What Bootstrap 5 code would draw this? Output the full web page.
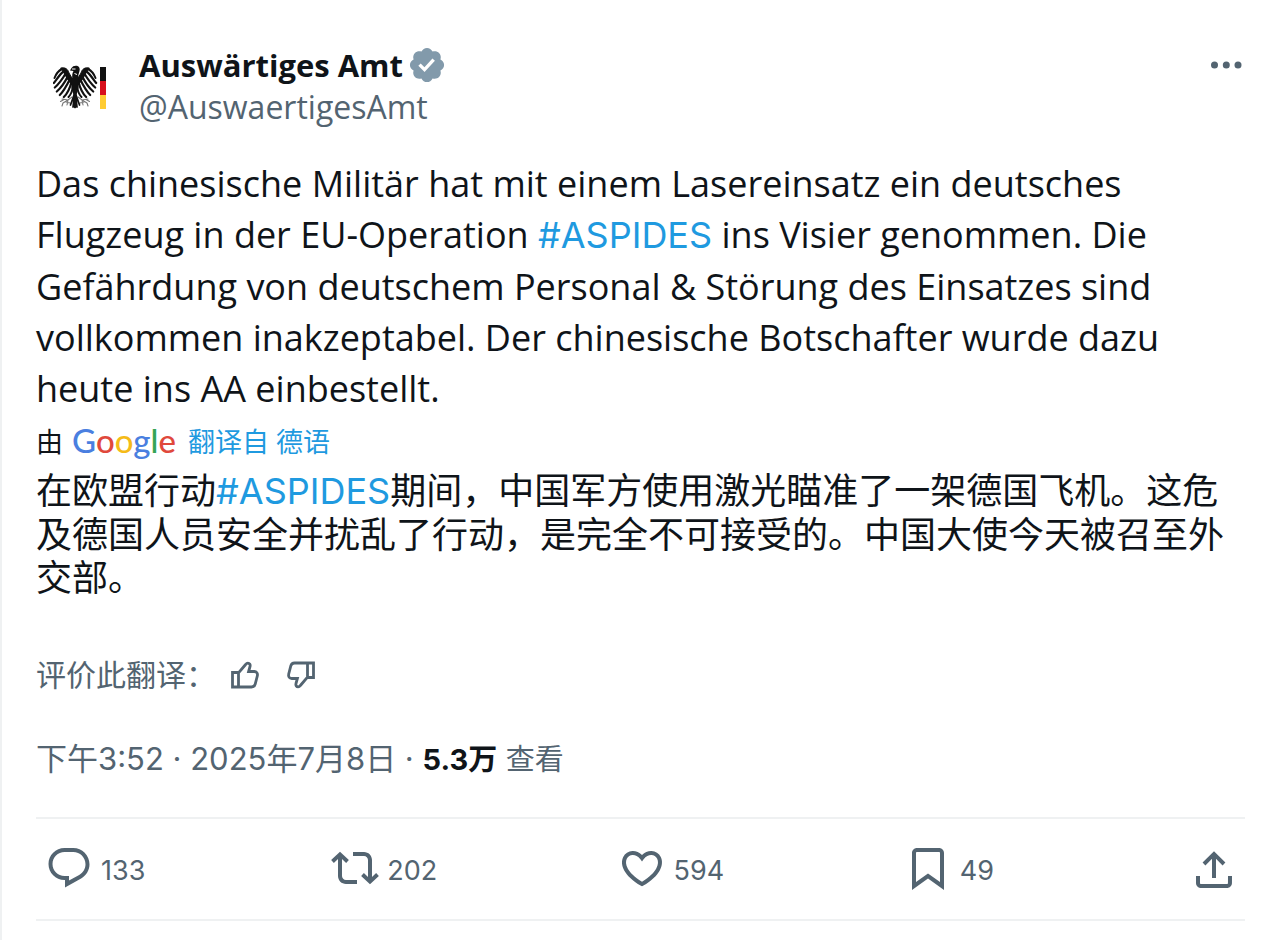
<!DOCTYPE html>
<html lang="zh-CN">
<head>
<meta charset="utf-8">
<meta name="viewport" content="width=device-width, initial-scale=1">
<title>Auswärtiges Amt</title>
<link href="https://cdn.jsdelivr.net/npm/bootstrap@5.3.0/dist/css/bootstrap.min.css" rel="stylesheet">
<style>
  :root {
    --ink: #0f1419;
    --muted: #536471;
    --accent: #1f9ae0;
    --rule: #eff1f2;
    --ui: Inter, "Noto Sans CJK SC", sans-serif;
  }
  body { color: var(--ink); font-family: "Open Sans", "Noto Sans CJK SC", sans-serif; }
  a { color: var(--accent); text-decoration: none; }
  svg { display: block; flex: none; }
  .post { border-left: 2px solid var(--rule); padding: 44px 35px 0 34px; }
  .avatar { width: 87px; height: 86px; }
  .author-name { font-size: 31px; font-weight: 700; line-height: 42px; color: var(--ink); }
  .author-handle { font-size: 32px; line-height: 42px; color: var(--muted); }
  .name-row { gap: 4px; }
  .icon-btn { padding: 0; border: 0; background: none; color: var(--muted); }
  .post-text { font-size: 36px; line-height: 51px; margin-top: 28px; }
  .post-text a, .translation a { font-family: var(--ui); }
  .credit { font-size: 27px; line-height: 44px; margin-top: 6px; }
  .google-word { font: 500 33px/38px Lato, sans-serif; margin: 0 12px 0 9px; padding-bottom: 4px; }
  .g-blue { color: #4a7fe0; } .g-red { color: #e0483c; } .g-yellow { color: #f5bb18; } .g-green { color: #35a456; }
  .translation { font-size: 36px; line-height: 43px; margin-top: 5px; }
  .rate { font-size: 30px; line-height: 44px; color: var(--muted); margin-top: 54px; }
  .rate-text { margin-right: 14px; }
  .rate .icon-btn + .icon-btn { margin-left: 26px; }
  .meta { font-family: var(--ui); font-size: 31px; line-height: 44px; color: var(--muted); margin-top: 40px; }
  .meta strong { font-size: 29px; color: var(--ink); }
  .meta .views { font-size: 29px; }
  .actions { border: solid var(--rule); border-width: 2px 0; margin-top: 35px; padding: 25px 7px 24px 9px; }
  .action { font: 27px/48px Inter, sans-serif; }
  .action span { padding-top: 3px; }
</style>
</head>
<body>
<main>
<article class="post min-vh-100">
  <header class="d-flex align-items-start">
    <a class="avatar d-flex align-items-center justify-content-center" href="#" aria-label="Auswärtiges Amt">
      <svg width="54" height="44" viewBox="0 0 54 44" aria-hidden="true">
        <defs>
          <g id="wing" fill="none" stroke="#111" stroke-linecap="round">
            <path d="M8 3C12 2 15 4 16 8L19.500 14L19 20L15 15L11 8Z" fill="#111" stroke-width="1"/>
            <path d="M9 4C5 6 3 9 1.500 13" stroke-width="2"/>
            <path d="M11 6C7 9 4 14 .800 18" stroke-width="2.200"/>
            <path d="M13 8C10 13 6 19 1.800 22.500" stroke-width="2.200"/>
            <path d="M15 11C12 17 8 23 3.800 26.500" stroke-width="2.200"/>
            <path d="M17 14C14 20 11 26 6.800 30" stroke-width="2.200"/>
            <path d="M18.500 17C17 23 15 28 10.800 32" stroke-width="2.200"/>
            <path d="M20 21C19.500 25 18.500 29 15.500 32" stroke-width="2"/>
            <path d="M19 32L15 35L9 34M15 35L10 38M15 35L14 40M11 34.500L7.500 36.500M10 38L9 41M13 37L17 38" stroke="#777" stroke-width="1.100"/>
            <path d="M21.500 29L20 42M21 30L17.500 40" stroke-width="1.700"/>
          </g>
        </defs>
        <use href="#wing"/>
        <use href="#wing" transform="translate(44 0) scale(-1 1)"/>
        <path d="M18 14Q22 10 26 14L25.500 23L23.500 30L24 42L22 43.500L20 42L20.500 30L18.500 23Z" fill="#111"/>
        <path d="M19.500 14Q18.500 9 20.500 6L17 5.500L18.500 3Q20 .300 24 .800Q27.500 2 26.500 6Q25 9 25.500 14Z" fill="#111"/>
        <path d="M19 4H22.500M21.500 8.500L24 9.500" stroke="#fff" stroke-width="1"/>
        <path d="M47 2h6v14h-6z" fill="#111"/><path d="M47 16h6v14h-6z" fill="#d8101c"/><path d="M47 30h6v14h-6z" fill="#fc3"/>
      </svg>
    </a>
    <div class="flex-grow-1 ps-3">
      <div class="name-row d-flex align-items-center">
        <a class="author-name" href="#">Auswärtiges Amt</a>
        <svg width="40" height="40" viewBox="0 0 24 24" fill="#829aab" role="img" aria-label="认证账号"><path d="M22.250 12c0-1.430-.880-2.670-2.190-3.340.460-1.390.200-2.900-.810-3.910s-2.520-1.270-3.910-.810c-.660-1.310-1.910-2.190-3.340-2.190s-2.670.880-3.330 2.190c-1.400-.460-2.910-.200-3.920.810s-1.260 2.520-.800 3.910c-1.310.670-2.200 1.910-2.200 3.340s.890 2.670 2.200 3.340c-.460 1.390-.210 2.900.800 3.910s2.520 1.260 3.910.810c.670 1.310 1.910 2.190 3.340 2.190s2.680-.880 3.340-2.190c1.390.450 2.900.200 3.910-.810s1.270-2.520.810-3.910c1.310-.670 2.190-1.910 2.190-3.340zm-11.710 4.200L6.800 12.460l1.410-1.420 2.260 2.260 4.800-5.230 1.470 1.360-6.200 6.770z"/></svg>
      </div>
      <a class="author-handle d-block" href="#">@AuswaertigesAmt</a>
    </div>
    <button class="icon-btn" type="button" aria-label="更多">
      <svg width="38" height="42" viewBox="0 0 38 42" fill="currentColor"><circle cx="7.500" cy="21" r="3.500"/><circle cx="19.300" cy="21" r="3.500"/><circle cx="31" cy="21" r="3.500"/></svg>
    </button>
  </header>

  <p class="post-text mb-0" lang="de">Das chinesische Militär hat mit einem Lasereinsatz ein deutsches Flugzeug in der EU-Operation <a href="#">#ASPIDES</a> ins Visier genommen. Die Gefährdung von deutschem Personal &amp; Störung des Einsatzes sind vollkommen inakzeptabel. Der chinesische Botschafter wurde dazu heute ins AA einbestellt.</p>

  <div class="credit d-flex align-items-center">
    <span>由</span>
    <span class="google-word"><span class="g-blue">G</span><span class="g-red">o</span><span class="g-yellow">o</span><span class="g-blue">g</span><span class="g-green">l</span><span class="g-red">e</span></span>
    <a href="#">翻译自 德语</a>
  </div>

  <p class="translation mb-0">在欧盟行动<a href="#">#ASPIDES</a>期间，中国军方使用激光瞄准了一架德国飞机。这危及德国人员安全并扰乱了行动，是完全不可接受的。中国大使今天被召至外交部。</p>

  <div class="rate d-flex align-items-center">
    <span class="rate-text">评价此翻译：</span>
    <button class="icon-btn" type="button" aria-label="翻译得好">
      <svg width="30" height="30" viewBox="0 0 30 30" fill="none" stroke="currentColor" stroke-width="2.800"><path id="thumb" d="M2.500 12.500h6v14.500h-6zM8.500 27H21.500C23.500 27 24.700 26 25.200 24.200L27.300 16C28 13.200 26.500 11.500 24.300 11.500H18.600L20 6.500C20.600 4.500 19.500 3.200 17.900 3.200C16.800 3.200 16.200 3.700 15.600 4.500L8.500 12.800"/></svg>
    </button>
    <button class="icon-btn" type="button" aria-label="翻译得不好">
      <svg width="30" height="30" viewBox="0 0 30 30" fill="none" stroke="currentColor" stroke-width="2.800"><use href="#thumb" transform="rotate(180 15 15)"/></svg>
    </button>
  </div>

  <div class="meta"><a class="text-reset" href="#">下午3:52 · 2025年7月8日</a> · <strong>5.3万</strong> <span class="views">查看</span></div>

  <div class="actions d-flex">
    <div class="flex-fill w-100"><button class="icon-btn action d-flex gap-2" type="button" aria-label="回复 133">
      <svg width="48" height="48" viewBox="0 0 24 24" fill="currentColor"><path d="M1.751 10c0-4.420 3.584-8 8.005-8h4.366c4.490 0 8.129 3.640 8.129 8.130 0 2.960-1.607 5.680-4.196 7.110l-8.054 4.460v-3.690h-.067c-4.490.100-8.183-3.510-8.183-8.010zm8.005-6c-3.317 0-6.005 2.690-6.005 6 0 3.370 2.770 6.080 6.138 6.010l.351-.010h1.761v2.300l5.087-2.810c1.951-1.080 3.163-3.130 3.163-5.360 0-3.390-2.744-6.130-6.129-6.130H9.756z"/></svg>
      <span>133</span></button></div>
    <div class="flex-fill w-100"><button class="icon-btn action d-flex gap-2" type="button" aria-label="转帖 202">
      <svg width="48" height="48" viewBox="0 0 24 24" fill="currentColor"><path d="M4.500 3.880l4.432 4.140-1.364 1.460L5.500 7.550V16c0 1.100.896 2 2 2H13v2H7.500c-2.209 0-4-1.790-4-4V7.550L1.432 9.480.068 8.020 4.500 3.880zM16.500 6H11V4h5.500c2.209 0 4 1.790 4 4v8.450l2.068-1.930 1.364 1.460-4.432 4.140-4.432-4.140 1.364-1.460 2.068 1.930V8c0-1.100-.896-2-2-2z"/></svg>
      <span>202</span></button></div>
    <div class="flex-fill w-100"><button class="icon-btn action d-flex gap-2" type="button" aria-label="喜欢 594">
      <svg width="48" height="48" viewBox="0 0 24 24" fill="currentColor"><path d="M16.697 5.500c-1.222-.060-2.679.510-3.890 2.160l-.805 1.090-.806-1.090C9.984 6.010 8.526 5.440 7.304 5.500c-1.243.070-2.349.780-2.910 1.910-.552 1.120-.633 2.780.479 4.820 1.074 1.970 3.257 4.270 7.129 6.610 3.870-2.340 6.052-4.640 7.126-6.610 1.111-2.040 1.030-3.700.477-4.820-.561-1.130-1.666-1.840-2.908-1.910zm4.187 7.690c-1.351 2.480-4.001 5.120-8.379 7.670l-.503.300-.504-.300c-4.379-2.550-7.029-5.190-8.382-7.670-1.360-2.500-1.410-4.860-.514-6.670.887-1.790 2.647-2.910 4.601-3.010 1.651-.090 3.368.560 4.798 2.010 1.429-1.450 3.146-2.100 4.796-2.010 1.954.100 3.714 1.220 4.601 3.010.896 1.810.846 4.170-.514 6.670z"/></svg>
      <span>594</span></button></div>
    <div class="flex-fill w-100"><button class="icon-btn action d-flex gap-2" type="button" aria-label="书签 49">
      <svg width="48" height="48" viewBox="0 0 24 24" fill="currentColor"><path d="M4 4.500C4 3.120 5.119 2 6.500 2h11C18.881 2 20 3.120 20 4.500v18.440l-8-5.710-8 5.710V4.500zM6.500 4c-.276 0-.500.220-.500.500v14.560l6-4.290 6 4.290V4.500c0-.280-.224-.500-.500-.500h-11z"/></svg>
      <span>49</span></button></div>
    <button class="icon-btn" type="button" aria-label="分享">
      <svg width="48" height="48" viewBox="0 0 24 24" fill="currentColor"><path d="M12 2.590l5.700 5.700-1.410 1.420L13 6.410V16h-2V6.410l-3.300 3.300-1.410-1.420L12 2.590zM21 15l-.020 3.510c0 1.380-1.120 2.490-2.500 2.490H5.500C4.110 21 3 19.880 3 18.500V15h2v3.500c0 .280.220.500.500.500h12.980c.280 0 .500-.220.500-.500L19 15h2z"/></svg>
    </button>
  </div>
</article>
</main>
<script src="https://cdn.jsdelivr.net/npm/bootstrap@5.3.0/dist/js/bootstrap.bundle.min.js"></script>
</body>
</html>
